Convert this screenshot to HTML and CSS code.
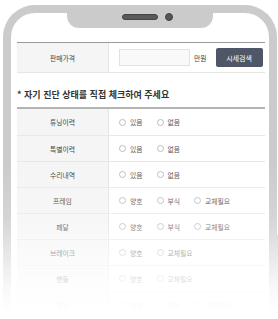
FILE: index.html
```html
<!DOCTYPE html>
<html lang="ko">
<head>
<meta charset="utf-8">
<link rel="stylesheet" href="styles.css">
</head>
<body>
<div class="stage">
  <div class="phone">
    <div class="notch"><span class="speaker"></span><span class="camera"></span></div>
    <div class="screen">
      <div class="price-row">
        <div class="label">판매가격</div>
        <div class="value">
          <span class="input"></span>
          <span class="unit">만원</span>
          <span class="btn">시세검색</span>
        </div>
      </div>
      <h2 class="heading">* 자기 진단 상태를 직접 체크하여 주세요</h2>
      <div class="check-table">
        <div class="row"><div class="label">튜닝이력</div><div class="value"><span class="opt"><i></i>있음</span><span class="opt"><i></i>없음</span></div></div>
        <div class="row"><div class="label">특별이력</div><div class="value"><span class="opt"><i></i>있음</span><span class="opt"><i></i>없음</span></div></div>
        <div class="row"><div class="label">수리내역</div><div class="value"><span class="opt"><i></i>있음</span><span class="opt"><i></i>없음</span></div></div>
        <div class="row"><div class="label">프레임</div><div class="value"><span class="opt"><i></i>양호</span><span class="opt"><i></i>부식</span><span class="opt"><i></i>교체필요</span></div></div>
        <div class="row"><div class="label">페달</div><div class="value"><span class="opt"><i></i>양호</span><span class="opt"><i></i>부식</span><span class="opt"><i></i>교체필요</span></div></div>
        <div class="row"><div class="label">브레이크</div><div class="value"><span class="opt"><i></i>양호</span><span class="opt"><i></i>교체필요</span></div></div>
        <div class="row"><div class="label">핸들</div><div class="value"><span class="opt"><i></i>양호</span><span class="opt"><i></i>교체필요</span></div></div>
        <div class="row"><div class="label">체인</div><div class="value"><span class="opt"><i></i>양호</span><span class="opt"><i></i>부식</span><span class="opt"><i></i>교체필요</span></div></div>
      </div>
    </div>
    <span class="side-btn"></span>
  </div>
  <div class="fade"></div>
</div>
</body>
</html>
```

FILE: styles.css
```css
html, body {
  margin: 0;
  padding: 0;
  background: #fff;
}
.stage {
  position: relative;
  width: 278px;
  height: 319px;
  overflow: hidden;
  font-family: "Noto Sans CJK KR", "Noto Sans", sans-serif;
  color: #555;
}
.phone {
  position: relative;
  margin: 5px 1px 0 3px;
  height: 340px;
  border: 8px solid #cbcbcb;
  border-bottom: none;
  border-radius: 32px 32px 0 0;
  background: #fff;
}
.notch {
  position: absolute;
  top: -1px;
  left: 56px;
  width: 146px;
  height: 16px;
  background: #cbcbcb;
  border-radius: 0 0 12px 12px;
}
.speaker {
  position: absolute;
  left: 55px;
  top: 2px;
  width: 34px;
  height: 4px;
  background: #5a5a5a;
  border: 1px solid #444;
  border-radius: 3px;
}
.camera {
  position: absolute;
  left: 98px;
  top: 1px;
  width: 6px;
  height: 6px;
  background: #555;
  border: 1px solid #444;
  border-radius: 50%;
}
.side-btn {
  position: absolute;
  right: -10px;
  top: 222px;
  width: 2px;
  height: 60px;
  background: #cbcbcb;
}
.screen {
  padding: 29px 4px 0 6px;
}
.price-row {
  display: grid;
  grid-template-columns: 92px 1fr;
  border-top: 1px solid #9a9a9a;
  border-bottom: 1px solid #e6e6e6;
  height: 29px;
}
.label {
  background: #f5f5f5;
  border-right: 1px solid #e4e4e4;
  display: flex;
  align-items: center;
  justify-content: center;
  font-size: 6.8px;
  color: #444;
}
.value {
  display: flex;
  align-items: center;
  padding-left: 10px;
  font-size: 6.8px;
  color: #555;
}
.input {
  width: 69px;
  height: 15px;
  border: 1px solid #e2e2e2;
  background: #f9f9f9;
}
.unit {
  margin-left: 4px;
  color: #444;
}
.btn {
  margin-left: 9px;
  width: 47px;
  height: 19px;
  background: #4f5667;
  color: #fff;
  border-radius: 2px;
  display: flex;
  align-items: center;
  justify-content: center;
  font-size: 7px;
}
.heading {
  margin: 16px 0 6px;
  font-size: 9px;
  line-height: 12px;
  font-weight: 700;
  color: #333;
}
.check-table {
  border-top: 2px solid #b4b4b4;
}
.row {
  display: grid;
  grid-template-columns: 92px 1fr;
  height: 25px;
  border-bottom: 1px solid #e8e8e8;
}
.row:first-child {
  height: 26px;
}
.opt {
  display: inline-flex;
  align-items: center;
  margin-right: 14px;
}
.opt i {
  width: 5px;
  height: 5px;
  border: 1px solid #bdbdbd;
  border-radius: 50%;
  margin-right: 4px;
  background: #fff;
}
.fade {
  position: absolute;
  left: 0;
  right: 0;
  top: 165px;
  bottom: 0;
  background: linear-gradient(to bottom, rgba(255,255,255,0) 0%, rgba(255,255,255,0.2) 35%, rgba(255,255,255,0.85) 78%, #fff 95%);
}
```
